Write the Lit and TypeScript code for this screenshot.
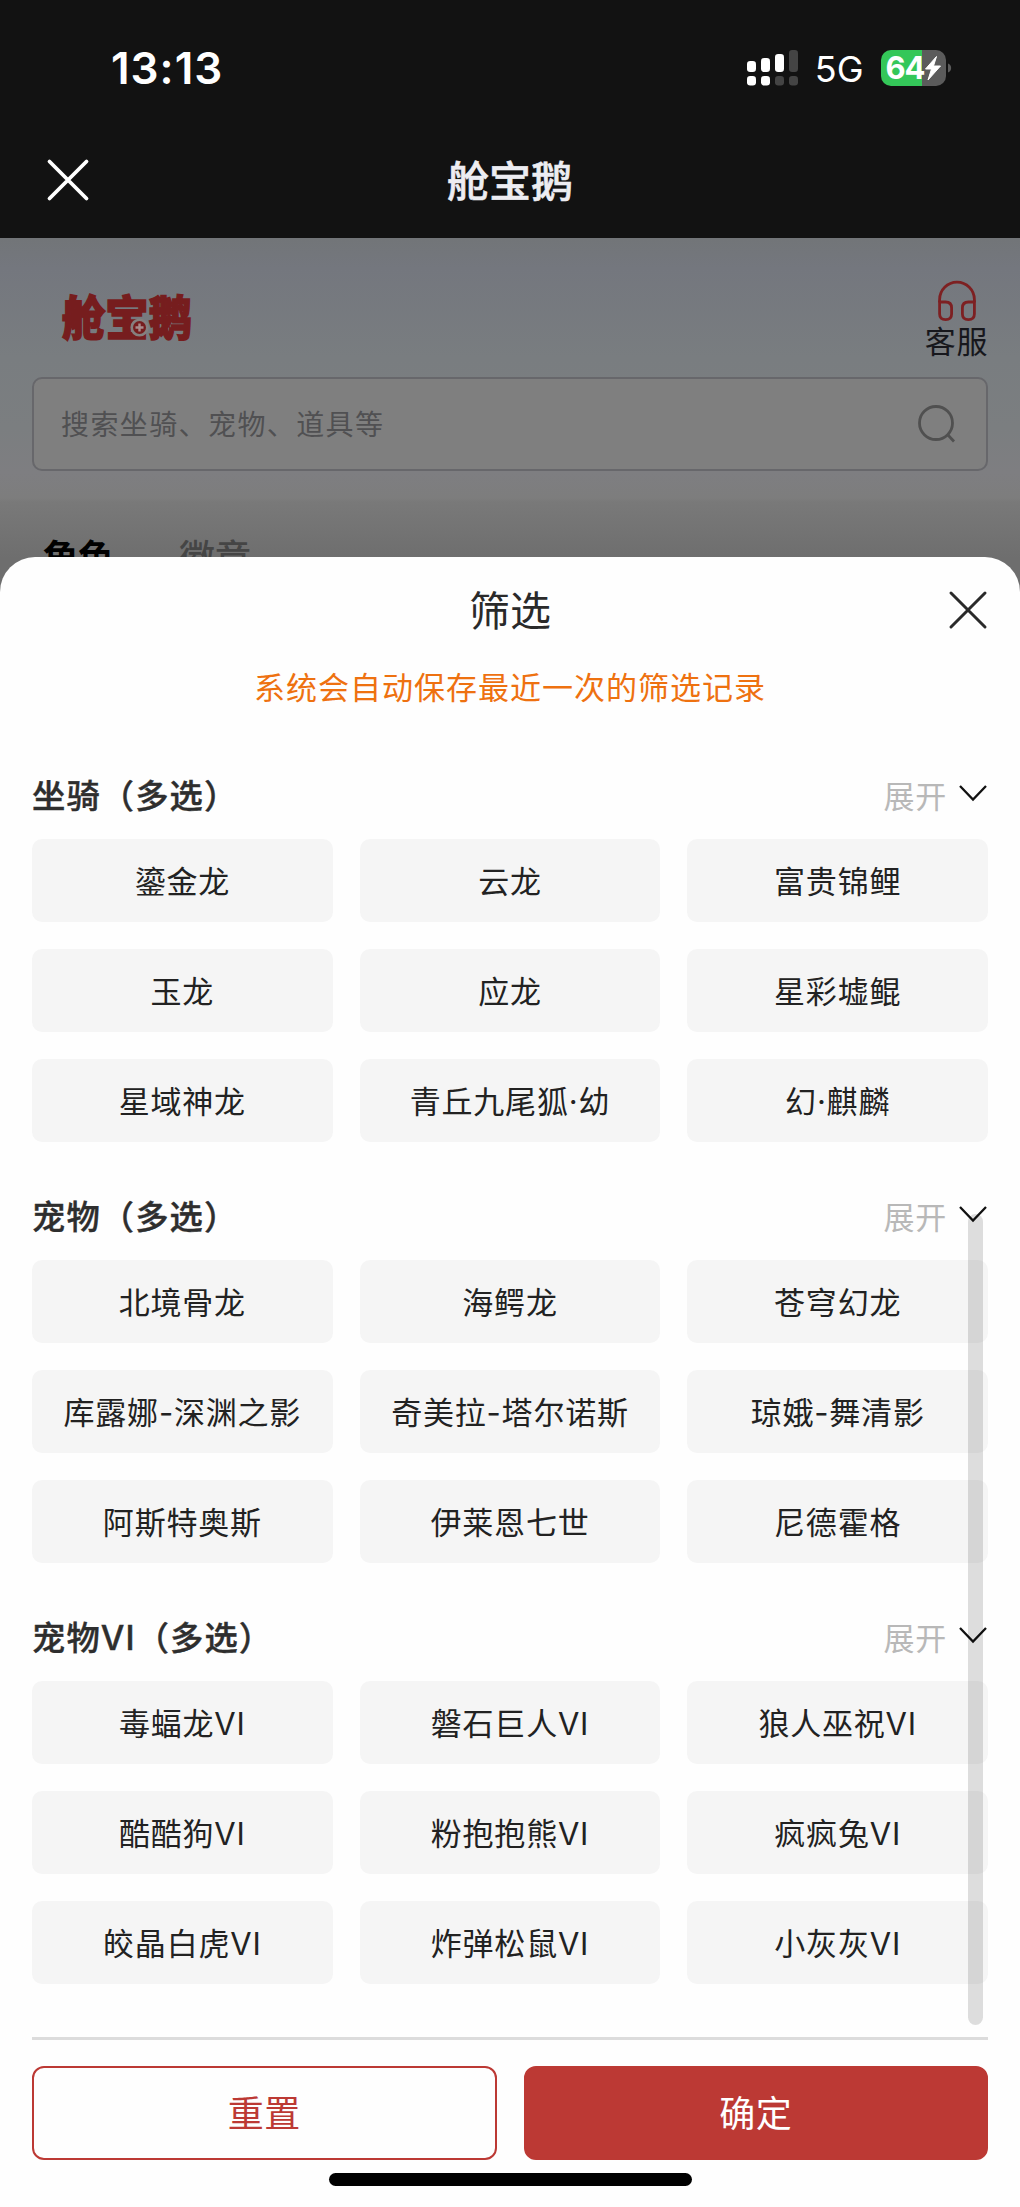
import { LitElement, html, css, svg } from "lit";
import { customElement, property } from "lit/decorators.js";

interface Group {
  title: string;
  items: string[];
}

const GROUPS: Group[] = [
  {
    title: "坐骑（多选）",
    items: ["鎏金龙", "云龙", "富贵锦鲤", "玉龙", "应龙", "星彩墟鲲", "星域神龙", "青丘九尾狐·幼", "幻·麒麟"],
  },
  {
    title: "宠物（多选）",
    items: ["北境骨龙", "海鳄龙", "苍穹幻龙", "库露娜-深渊之影", "奇美拉-塔尔诺斯", "琼娥-舞清影", "阿斯特奥斯", "伊莱恩七世", "尼德霍格"],
  },
  {
    title: "宠物VI（多选）",
    items: ["毒蝠龙VI", "磐石巨人VI", "狼人巫祝VI", "酷酷狗VI", "粉抱抱熊VI", "疯疯兔VI", "皎晶白虎VI", "炸弹松鼠VI", "小灰灰VI"],
  },
];

const SIGNAL = [
  { x: 0, top: 11, on: true, dot: true },
  { x: 14, top: 8, on: true, dot: true },
  { x: 28, top: 4, on: true, dot: false },
  { x: 42, top: 0, on: false, dot: false },
];

@customElement("status-bar")
class StatusBar extends LitElement {
  static styles = css`
    :host { display: flex; box-sizing: border-box; height: 136px; padding: 0 67.5px 0 111px; align-items: center; justify-content: space-between; color: #fff; font-family: Inter, sans-serif; }
    .time { font-size: 44px; font-weight: 600; line-height: 54px; letter-spacing: 1px; }
    .right { display: flex; align-items: center; }
    .net { font-size: 36px; line-height: 44px; margin: 2px 17px 0 16px; }
    .sig, .nub, .bolt { display: block; }
    .bat { display: flex; box-sizing: border-box; width: 65px; height: 36px; padding-left: 5px; align-items: center; border-radius: 10px; background: linear-gradient(90deg, #34c759 41.5px, #5b5b5b 41.5px); }
    .level { font-size: 31px; font-weight: 700; line-height: 36px; letter-spacing: -1.2px; }
    .bolt { flex: none; }
    .nub { margin-left: 2px; }
  `;
  render() {
    return html`
      <span class="time">13:13</span>
      <div class="right">
        <svg class="sig" width="52" height="36" viewBox="0 0 52 36">
          ${SIGNAL.map(
            (b) => svg`
              <rect x=${b.x} y=${b.top} width="9" height=${22 - b.top} rx="3.2" fill=${b.on ? "#fff" : "#444"} />
              <rect x=${b.x} y="26" width="9" height="9.5" rx="3.2" fill=${b.dot ? "#fff" : "#444"} />`
          )}
        </svg>
        <span class="net">5G</span>
        <div class="bat">
          <span class="level">64</span>
          <svg class="bolt" width="18" height="26" viewBox="0 0 18 26"><path d="M12.5 1.5 L1.5 14 H7.5 L4 25 L16.5 11 H9.5 Z" fill="#fff" stroke="#fff" stroke-width="1" stroke-linejoin="round" /></svg>
        </div>
        <svg class="nub" width="5" height="10" viewBox="0 0 5 10"><path d="M0 .5a4.8 4.8 0 0 1 0 9z" fill="#5b5b5b" /></svg>
      </div>
    `;
  }
}

@customElement("filter-group")
class FilterGroup extends LitElement {
  @property() heading = "";
  @property({ attribute: false }) items: string[] = [];
  static styles = css`
    :host { display: block; }
    .head { display: flex; height: 83px; align-items: center; justify-content: space-between; }
    .title { font-family: Inter, "Noto Sans CJK SC", sans-serif; font-size: 33.3px; font-weight: 500; color: #2e2e2e; line-height: 48px; letter-spacing: 1.1px; margin: -3px 0 0; -webkit-text-stroke: 0.4px #2e2e2e; }
    .more { display: flex; align-items: center; gap: 11px; color: #b8b8b8; font-size: 31px; letter-spacing: 0.8px; line-height: 46px; margin-top: -5px; }
    .chev { display: block; margin: -4px 0 0; }
    .grid { display: grid; grid-template-columns: repeat(3, 1fr); gap: 27px; }
    .chip { display: flex; box-sizing: border-box; height: 83px; padding-top: 3px; align-items: center; justify-content: center; background: #f5f5f5; border-radius: 10px; color: #222; font-family: Inter, "Noto Sans CJK SC", sans-serif; font-size: 31px; line-height: 46px; letter-spacing: 0.8px; white-space: nowrap; }
  `;
  render() {
    return html`
      <div class="head">
        <span class="title">${this.heading}</span>
        <span class="more">展开
          <svg class="chev" width="30" height="18" viewBox="0 0 30 18"><path d="M2 2 L15 15.5 L28 2" fill="none" stroke="#111" stroke-width="2.3" /></svg>
        </span>
      </div>
      <div class="grid">${this.items.map((t) => html`<div class="chip">${t}</div>`)}</div>
    `;
  }
}

@customElement("app-root")
class AppRoot extends LitElement {
  static styles = css`
    :host { display: block; width: 1020px; height: 2207px; overflow: hidden; font-family: "Noto Sans CJK SC", sans-serif; background: #fefefe; }
    .top { height: 238px; background: #121212; color: #ededf2; }
    .nav { display: grid; grid-template-columns: 1fr auto 1fr; align-items: center; height: 88px; padding: 0 46px; }
    .nav-title { font-size: 42px; font-weight: 500; line-height: 60px; margin-top: -3px; -webkit-text-stroke: 0.6px #ededf2; }
    .icon { display: block; }
    .back { box-sizing: border-box; height: 372px; background: linear-gradient(#727578 0, #74777e 30px, #797d80 120px, #7b7e80 190px, #7e7e81 235px, #7d7d7d 260px, #797979 264px, #6e6e6e 320px); padding: 0 32px; }
    .brand { display: flex; height: 139px; justify-content: space-between; }
    .logo { display: block; margin: 41px 0 0 26px; }
    .mark { font-size: 42px; font-weight: 900; font-family: "Noto Sans CJK SC", sans-serif; }
    .service { display: flex; flex-direction: column; align-items: center; padding-top: 42px; color: #17171c; font-size: 31px; line-height: 36px; letter-spacing: 0.6px; }
    .service .icon { margin-left: 2px; }
    .search { display: flex; box-sizing: border-box; height: 94px; align-items: center; justify-content: space-between; padding: 0 29px 0 27px; border: 2px solid #67676b; border-radius: 10px; background: #7f7f7f; color: #505052; font-size: 28px; letter-spacing: 1.4px; }
    .search-text { margin-top: -2px; }
    .tabs { display: flex; gap: 65px; padding: 59px 0 0 10px; font-size: 36px; line-height: 50px; color: #454545; font-weight: 500; }
    .active { color: #000; font-weight: 700; }
    .sheet { position: relative; box-sizing: border-box; height: 1650px; margin-top: -53px; padding: 0 32px; border-radius: 35px 35px 0 0; background: #fefefe; }
    .sheet-head { display: grid; grid-template-columns: 1fr auto 1fr; align-items: center; height: 106px; }
    .sheet-title { font-size: 41px; line-height: 60px; color: #2a2a2a; margin-top: -5px; }
    .end { justify-self: end; }
    .notice { text-align: center; font-size: 31px; letter-spacing: 1px; line-height: 46px; color: #ee7110; padding-bottom: 47px; }
    .groups { display: flex; flex-direction: column; gap: 35px; }
    .foot { display: grid; grid-template-columns: 1fr 1fr; gap: 27px; margin-top: 53px; padding-top: 26px; border-top: 3px solid #dcdcdc; }
    .btn { display: flex; box-sizing: border-box; height: 94px; padding-bottom: 4px; align-items: center; justify-content: center; border: 2px solid #bc3934; border-radius: 12px; font-size: 36px; letter-spacing: 0.5px; color: #bc3934; }
    .solid { background: #bc3934; color: #fff; }
    .home { width: 363px; height: 13px; margin: 13px auto 0; border-radius: 7px; background: #000; }
    .bar { position: absolute; left: 968px; top: 657px; width: 15px; height: 811px; border-radius: 8px; background: rgba(0, 0, 0, 0.13); }
  `;
  render() {
    return html`
      <div class="top">
        <status-bar></status-bar>
        <div class="nav">
          <svg class="icon" width="44" height="44" viewBox="0 0 44 44"><path d="M3.5 3.5 L40.5 40.5 M40.5 3.5 L3.5 40.5" stroke="#fff" stroke-width="3.8" stroke-linecap="round" /></svg>
          <span class="nav-title">舱宝鹅</span>
          <span></span>
        </div>
      </div>
      <div class="back">
        <div class="brand">
          <svg class="logo" width="146" height="84" viewBox="0 0 146 84">
            <g transform="translate(4 55.5) scale(1 1.12)">
              <text class="mark" x="0" y="0" fill="#761d1e" stroke="#761d1e" stroke-width="1.4" textLength="130" lengthAdjust="spacingAndGlyphs">舱宝鹅</text>
            </g>
            <circle cx="81.5" cy="48.5" r="7.8" fill="#761d1e" stroke="#85807f" stroke-width="2.6" />
            <path d="M81.5 44.5v8M77.5 48.5h8" stroke="#a98c8c" stroke-width="2.4" />
          </svg>
          <div class="service">
            <svg class="icon" width="40" height="42" viewBox="0 0 40 42" fill="none" stroke="#7d2022" stroke-width="2.8">
              <path d="M2.6 22.5 V19.5 A17.2 17.2 0 0 1 37.4 19.5 V22.5" />
              <path d="M2.6 22 H8.5 Q14.6 22 14.6 28 V34 Q14.6 39.6 8.6 39.6 Q2.6 39.6 2.6 34 Z" />
              <path d="M37.4 22 H31.5 Q25.4 22 25.4 28 V34 Q25.4 39.6 31.4 39.6 Q37.4 39.6 37.4 34 Z" />
            </svg>
            <span>客服</span>
          </div>
        </div>
        <div class="search">
          <span class="search-text">搜索坐骑、宠物、道具等</span>
          <svg class="icon" width="40" height="40" viewBox="0 0 40 40" fill="none" stroke="#505050" stroke-width="2.8"><circle cx="19" cy="19" r="16.5" /><path d="M30.5 30.5 L37 37.5" /></svg>
        </div>
        <div class="tabs"><span class="active">角色</span><span>徽章</span></div>
      </div>
      <div class="sheet">
        <div class="sheet-head">
          <span></span>
          <span class="sheet-title">筛选</span>
          <svg class="icon end" width="40" height="40" viewBox="0 0 40 40"><path d="M3 3 L37 37 M37 3 L3 37" stroke="#2a2a2a" stroke-width="3" stroke-linecap="round" /></svg>
        </div>
        <div class="notice">系统会自动保存最近一次的筛选记录</div>
        <div class="groups">
          ${GROUPS.map((g) => html`<filter-group .heading=${g.title} .items=${g.items}></filter-group>`)}
        </div>
        <div class="foot">
          <div class="btn">重置</div>
          <div class="btn solid">确定</div>
        </div>
        <div class="home"></div>
        <div class="bar"></div>
      </div>
    `;
  }
}
